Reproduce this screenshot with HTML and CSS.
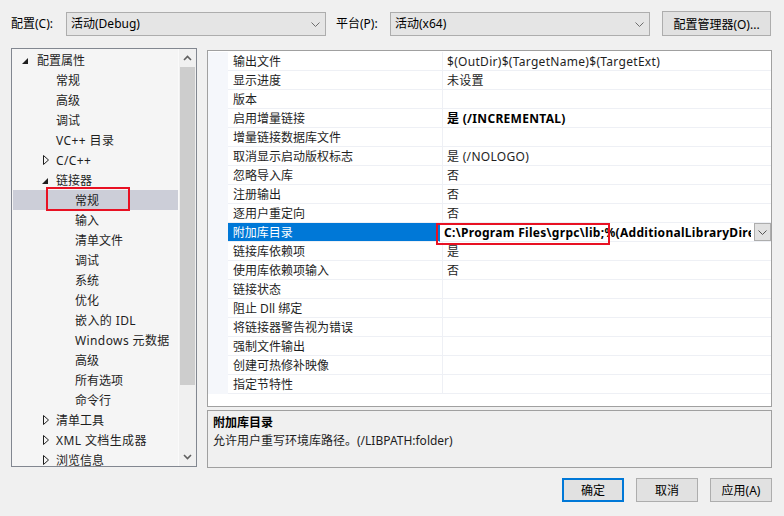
FILE: index.html
```html
<!DOCTYPE html>
<html>
<head>
<meta charset="utf-8">
<link rel="stylesheet" href="styles.css">
</head>
<body>
<div class="window">
  <div class="topbar">
    <span class="lbl lbl1">配置(C):</span>
    <div class="combo"><span>活动(Debug)</span><svg class="chev" width="9" height="5" viewBox="0 0 9 5"><path d="M0.5 0.5 L4.5 4.5 L8.5 0.5" fill="none" stroke="#6d6d6d" stroke-width="1"/></svg></div>
    <span class="lbl lbl2">平台(P):</span>
    <div class="combo"><span>活动(x64)</span><svg class="chev" width="9" height="5" viewBox="0 0 9 5"><path d="M0.5 0.5 L4.5 4.5 L8.5 0.5" fill="none" stroke="#6d6d6d" stroke-width="1"/></svg></div>
    <div class="btn mgr">配置管理器(O)...</div>
  </div>

  <div class="main">
    <div class="tree">
      <div class="tree-list">
        <div class="trow l0"><svg class="tri" width="6" height="6" viewBox="0 0 6 6"><path d="M6 0 L6 6 L0 6 Z" fill="#1e1e1e"/></svg><span>配置属性</span></div>
        <div class="trow l1"><span>常规</span></div>
        <div class="trow l1"><span>高级</span></div>
        <div class="trow l1"><span>调试</span></div>
        <div class="trow l1"><span class="lat">VC++ 目录</span></div>
        <div class="trow l1"><svg class="tri" width="6" height="10" viewBox="0 0 6 10"><path d="M0.5 0.5 L5.5 5 L0.5 9.5 Z" fill="none" stroke="#1e1e1e" stroke-width="1"/></svg><span class="lat">C/C++</span></div>
        <div class="trow l1"><svg class="tri" width="6" height="6" viewBox="0 0 6 6"><path d="M6 0 L6 6 L0 6 Z" fill="#1e1e1e"/></svg><span>链接器</span></div>
        <div class="trow l2 sel"><span>常规</span></div>
        <div class="trow l2"><span>输入</span></div>
        <div class="trow l2"><span>清单文件</span></div>
        <div class="trow l2"><span>调试</span></div>
        <div class="trow l2"><span>系统</span></div>
        <div class="trow l2"><span>优化</span></div>
        <div class="trow l2"><span class="lat">嵌入的 IDL</span></div>
        <div class="trow l2"><span class="lat">Windows 元数据</span></div>
        <div class="trow l2"><span>高级</span></div>
        <div class="trow l2"><span>所有选项</span></div>
        <div class="trow l2"><span>命令行</span></div>
        <div class="trow l1"><svg class="tri" width="6" height="10" viewBox="0 0 6 10"><path d="M0.5 0.5 L5.5 5 L0.5 9.5 Z" fill="none" stroke="#1e1e1e" stroke-width="1"/></svg><span>清单工具</span></div>
        <div class="trow l1"><svg class="tri" width="6" height="10" viewBox="0 0 6 10"><path d="M0.5 0.5 L5.5 5 L0.5 9.5 Z" fill="none" stroke="#1e1e1e" stroke-width="1"/></svg><span class="lat">XML 文档生成器</span></div>
        <div class="trow l1"><svg class="tri" width="6" height="10" viewBox="0 0 6 10"><path d="M0.5 0.5 L5.5 5 L0.5 9.5 Z" fill="none" stroke="#1e1e1e" stroke-width="1"/></svg><span>浏览信息</span></div>
        <div class="redbox tree-mark"></div>
      </div>
      <div class="vscroll">
        <div class="arrow"><svg width="9" height="6" viewBox="0 0 9 6"><path d="M1 5 L4.5 1.5 L8 5" fill="none" stroke="#606060" stroke-width="1.6"/></svg></div>
        <div class="track"><div class="thumb"></div></div>
        <div class="arrow"><svg width="9" height="6" viewBox="0 0 9 6"><path d="M1 1 L4.5 4.5 L8 1" fill="none" stroke="#606060" stroke-width="1.6"/></svg></div>
      </div>
    </div>

    <div class="right">
      <div class="grid">
        <div class="prow"><div class="gut"></div><div class="name">输出文件</div><div class="val">$(OutDir)$(TargetName)$(TargetExt)</div></div>
        <div class="prow"><div class="gut"></div><div class="name">显示进度</div><div class="val">未设置</div></div>
        <div class="prow"><div class="gut"></div><div class="name">版本</div><div class="val"></div></div>
        <div class="prow"><div class="gut"></div><div class="name">启用增量链接</div><div class="val b">是 (/INCREMENTAL)</div></div>
        <div class="prow"><div class="gut"></div><div class="name">增量链接数据库文件</div><div class="val"></div></div>
        <div class="prow"><div class="gut"></div><div class="name">取消显示启动版权标志</div><div class="val">是 (/NOLOGO)</div></div>
        <div class="prow"><div class="gut"></div><div class="name">忽略导入库</div><div class="val">否</div></div>
        <div class="prow"><div class="gut"></div><div class="name">注册输出</div><div class="val">否</div></div>
        <div class="prow"><div class="gut"></div><div class="name">逐用户重定向</div><div class="val">否</div></div>
        <div class="prow active"><div class="gut"></div><div class="name">附加库目录</div><div class="val b"><span class="clip">C:\Program Files\grpc\lib;%(AdditionalLibraryDirectories)</span><div class="ddbtn"><svg width="9" height="5" viewBox="0 0 9 5"><path d="M0.5 0.5 L4.5 4.5 L8.5 0.5" fill="none" stroke="#555" stroke-width="1"/></svg></div><div class="redbox val-mark"></div></div></div>
        <div class="prow"><div class="gut"></div><div class="name">链接库依赖项</div><div class="val">是</div></div>
        <div class="prow"><div class="gut"></div><div class="name">使用库依赖项输入</div><div class="val">否</div></div>
        <div class="prow"><div class="gut"></div><div class="name">链接状态</div><div class="val"></div></div>
        <div class="prow"><div class="gut"></div><div class="name">阻止 Dll 绑定</div><div class="val"></div></div>
        <div class="prow"><div class="gut"></div><div class="name">将链接器警告视为错误</div><div class="val"></div></div>
        <div class="prow"><div class="gut"></div><div class="name">强制文件输出</div><div class="val"></div></div>
        <div class="prow"><div class="gut"></div><div class="name">创建可热修补映像</div><div class="val"></div></div>
        <div class="prow"><div class="gut"></div><div class="name">指定节特性</div><div class="val"></div></div>
      </div>
      <div class="desc">
        <div class="desc-title">附加库目录</div>
        <div class="desc-text">允许用户重写环境库路径。(/LIBPATH:folder)</div>
      </div>
    </div>
  </div>

  <div class="footer">
    <div class="btn ok">确定</div>
    <div class="btn">取消</div>
    <div class="btn">应用(A)</div>
  </div>
</div>
</body>
</html>
```

FILE: styles.css
```css
* { box-sizing: border-box; }
html, body { margin: 0; padding: 0; }
body {
  width: 784px;
  height: 516px;
  background: #f0f0f0;
  font-family: "Noto Sans", "Noto Sans CJK SC", sans-serif;
  font-size: 12px;
  color: #000;
  overflow: hidden;
}
.window { width: 784px; height: 516px; }

.topbar {
  display: flex;
  align-items: flex-start;
  padding: 12px 0 0 11px;
  height: 48px;
}
.lbl { line-height: 24px; }
.lbl1 { width: 55px; }
.lbl2 { width: 54px; margin-left: 10px; }
.combo {
  width: 260px;
  height: 24px;
  border: 1px solid #adadad;
  background: #e5e5e5;
  display: flex;
  align-items: center;
  justify-content: space-between;
  padding: 0 5px 0 4px;
}
.combo span { line-height: 22px; }
.btn {
  height: 24px;
  border: 1px solid #adadad;
  background: #e1e1e1;
  display: flex;
  align-items: center;
  justify-content: center;
  width: 62px;
}
.mgr { width: 109px; height: 25px; margin-left: 12px; margin-top: -1px; }

.main { display: flex; align-items: flex-start; }
.tree {
  margin-left: 11px;
  width: 186px;
  height: 419px;
  border: 1px solid #828790;
  display: flex;
  background: #f5f5f5;
}
.tree-list {
  position: relative;
  width: 167px;
  padding-top: 1px;
  overflow: hidden;
  border-right: 1px solid #fafafa;
}
.trow {
  height: 20px;
  display: flex;
  align-items: center;
  white-space: nowrap;
  position: relative;
  color: #1e1e1e;
}
.lat { letter-spacing: 0.4px; }
.trow .tri { position: absolute; }
.l0 { padding-left: 25px; }
.l0 .tri { left: 10px; top: 8px; }
.l1 { padding-left: 44px; }
.l1 .tri { left: 31px; top: 5px; }
.l1 svg[height="6"] { left: 30px; top: 8px; }
.l2 { padding-left: 63px; }
.sel { background: #ccced8; margin-left: 1px; padding-left: 62px; }

.redbox {
  position: absolute;
  border: 2px solid #e81123;
  pointer-events: none;
}
.tree-mark { left: 34px; top: 138px; width: 84px; height: 24px; }

.vscroll {
  width: 17px;
  display: flex;
  flex-direction: column;
  background: #f0f0f0;
}
.arrow {
  height: 18px;
  display: flex;
  align-items: center;
  justify-content: center;
}
.track { flex: 1; position: relative; }
.thumb {
  position: absolute;
  left: 1px;
  right: 1px;
  top: 0px;
  height: 318px;
  background: #cdcdcd;
}

.right {
  margin-left: 10px;
  width: 565px;
  display: flex;
  flex-direction: column;
  gap: 3px;
  margin-top: 2px;
}
.grid {
  height: 357px;
  border: 1px solid #a0a0a0;
  background: #fff;
  padding-top: 1px;
}
.prow {
  display: flex;
  height: 19px;
}
.gut { width: 20px; background: #f5f7fb; }
.name {
  width: 215px;
  padding-left: 5px;
  border-bottom: 1px solid #eef0f5;
  border-right: 1px solid #eef0f5;
  line-height: 19px;
  color: #1e1e1e;
  white-space: nowrap;
  overflow: hidden;
}
.val {
  flex: 1;
  padding-left: 4px;
  border-bottom: 1px solid #eef0f5;
  line-height: 19px;
  white-space: nowrap;
  overflow: hidden;
  position: relative;
  color: #1e1e1e;
  letter-spacing: 0.3px;
}
.b { font-weight: bold; color: #000; }
.active .name { background: #0078d7; color: #fff; border-right-color: #0078d7; }
.active .val { display: flex; overflow: visible; }
.clip { overflow: hidden; width: 307px; display: block; }
.ddbtn {
  width: 17px;
  height: 18px;
  margin-left: 3px;
  border: 1px solid #adadad;
  background: #e1e1e1;
  display: flex;
  align-items: center;
  justify-content: center;
}
.val-mark { left: -4px; top: 0px; width: 174px; height: 22px; }

.desc {
  height: 58px;
  border: 1px solid #a0a0a0;
  background: #f0f0f0;
  padding: 3px 0 0 5px;
}
.desc-title { font-weight: bold; line-height: 18px; }
.desc-text { line-height: 18px; color: #1e1e1e; }

.footer {
  display: flex;
  gap: 12px;
  padding-left: 562px;
  margin-top: 10px;
}
.ok { border: 2px solid #0078d7; }
```
